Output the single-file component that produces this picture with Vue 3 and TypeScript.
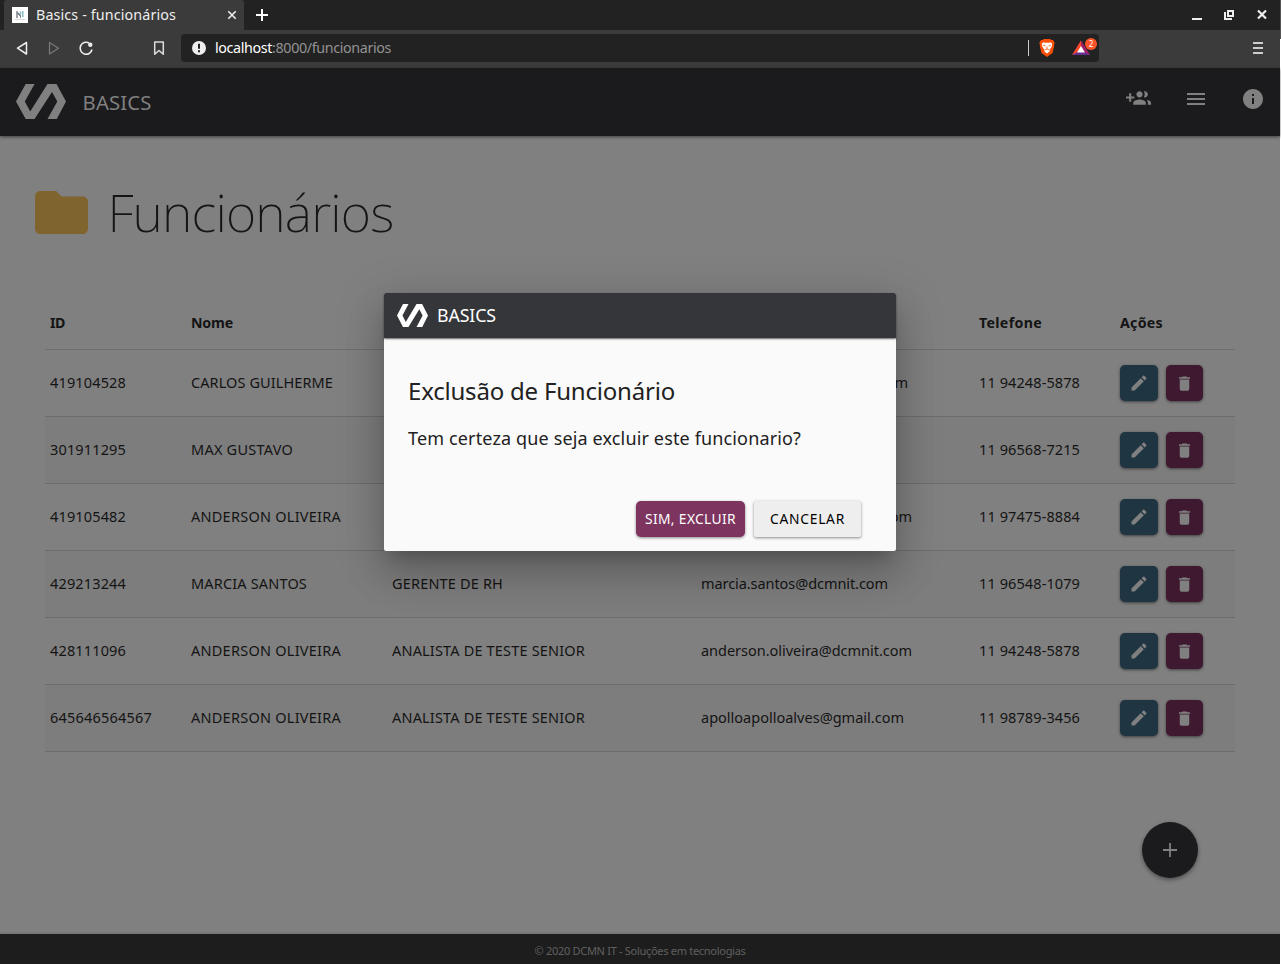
<script setup lang="ts">
import { onMounted } from 'vue'

interface Employee {
  id: string
  name: string
  role: string
  email: string
  phone: string
  w: number[]
}

const headers = [
  { t: 'ID', w: 15 }, { t: 'Nome', w: 42 }, { t: 'Cargo', w: 43 },
  { t: 'E-mail', w: 46 }, { t: 'Telefone', w: 63 }, { t: 'Ações', w: 43 },
]

const employees: Employee[] = [
  { id: '419104528', name: 'CARLOS GUILHERME', role: 'ANALISTA DE TESTE SENIOR', email: 'carlos.guilherme@dcmnit.com', phone: '11 94248-5878', w: [76, 142, 193, 207, 101] },
  { id: '301911295', name: 'MAX GUSTAVO', role: 'ANALISTA DE TESTE', email: 'max.gustavo@dcmnit.com', phone: '11 96568-7215', w: [76, 102, 140, 180, 101] },
  { id: '419105482', name: 'ANDERSON OLIVEIRA', role: 'ANALISTA DE TESTE SENIOR', email: 'anderson.oliveira@dcmnit.com', phone: '11 97475-8884', w: [76, 150, 193, 211, 101] },
  { id: '429213244', name: 'MARCIA SANTOS', role: 'GERENTE DE RH', email: 'marcia.santos@dcmnit.com', phone: '11 96548-1079', w: [76, 116, 111, 187, 101] },
  { id: '428111096', name: 'ANDERSON OLIVEIRA', role: 'ANALISTA DE TESTE SENIOR', email: 'anderson.oliveira@dcmnit.com', phone: '11 94248-5878', w: [76, 150, 193, 211, 101] },
  { id: '645646564567', name: 'ANDERSON OLIVEIRA', role: 'ANALISTA DE TESTE SENIOR', email: 'apolloapolloalves@gmail.com', phone: '11 98789-3456', w: [102, 150, 193, 203, 101] },
]

const cells = (e: Employee): string[] => [e.id, e.name, e.role, e.email, e.phone]

const logoPath = 'M9.700 0h8.900L8.800 17.500l5.400 10L31.500 0h9L50 17.500 40.800 35h-9.300l9.800-17.500L36 8 18.500 35H9.700L0 17.500z'

// Tracks each label so that it fills its intended measure.
const fit = (el: HTMLElement, w: number) => {
  el.style.letterSpacing = '0px'
  const n = (el.textContent ?? '').length
  const natural = el.getBoundingClientRect().width
  el.style.letterSpacing = `${(w - natural) / n}px`
}
const vFit = {
  mounted: (el: HTMLElement, b: { value: number }) => fit(el, b.value),
}
onMounted(() => {
  document.title = 'Basics - funcionários'
})
</script>

<template>
  <div class="window">
    <div class="screen">
      <div class="tabs">
        <div class="tab">
          <svg class="favicon" viewBox="0 0 16 16"><rect width="16" height="16" fill="#fff" /><path d="M5 4v7M6 6l2.500 3" stroke="#6a6f78" stroke-width="1.300" fill="none" /><path d="M8.500 4.500v3M10.800 4v6" stroke="#82b8bd" stroke-width="1.400" /><path d="M8.500 8v3" stroke="#888" stroke-width="1" /><path d="M3 12.500h10" stroke="#ccc" stroke-width=".7" /></svg>
          <span v-fit="140" class="tab-title">Basics - funcionários</span>
          <svg class="tab-close" viewBox="0 0 10 10"><path d="M1.300 1.300l7.400 7.400M8.700 1.300L1.300 8.700" stroke="#eee" stroke-width="1.600" /></svg>
        </div>
        <svg class="new-tab" viewBox="0 0 12 12"><path d="M6 0v12M0 6h12" stroke="#fff" stroke-width="2" /></svg>
        <svg class="win-btns" viewBox="0 0 80 14">
          <path d="M2 12h10" stroke="#eee" stroke-width="2" />
          <path d="M38 4h5v5h-5z" stroke="#eee" stroke-width="2" fill="none" /><path d="M35 5v7h7" stroke="#eee" stroke-width="2" fill="none" />
          <path d="M68 3.500l8 8M76 3.500l-8 8" stroke="#eee" stroke-width="2.200" />
        </svg>
      </div>
      <div class="toolbar">
        <svg class="nav" viewBox="0 0 180 38">
          <path d="M26.500 12.500v11.500L17.500 18.200z" fill="none" stroke="#eee" stroke-width="1.500" stroke-linejoin="round" />
          <path d="M49.500 12.500v11.500L58.500 18.200z" fill="none" stroke="#777" stroke-width="1.300" stroke-linejoin="round" />
          <path d="M89 13A6 6 0 1 0 92 19.500" fill="none" stroke="#eee" stroke-width="1.600" /><circle cx="90.300" cy="14.700" r="2.200" fill="#eee" />
          <path d="M154.700 12h8.600v12.300l-4.300-3.800-4.300 3.800z" fill="none" stroke="#ddd" stroke-width="1.500" stroke-linejoin="round" />
        </svg>
        <div class="address">
          <svg class="warn" viewBox="0 0 14 14"><circle cx="7" cy="7" r="7" fill="#eee" /><path d="M7 2.700v5M7 9.300v2" stroke="#222" stroke-width="2" /></svg>
          <span v-fit="176" class="url"><b>localhost</b>:8000/funcionarios</span>
          <i class="divider"></i>
          <svg class="brave" viewBox="0 0 16 18"><path d="M3.500 1L5 0h6l1.500 1h1.500l1.700 3-.7 2 .2 1-1.700 7L8 18l-5.500-4L.8 7 1 6 .3 4 2 1z" fill="#fb4f08" /><path d="M2.800 4.800L4.500 3.200l1.500.5h4l1.500-.5 1.700 1.600-.3 2.500-2 3.200L10.500 12.500 8 14.500l-2.500-2-.4-2-2-3.200z" fill="#fff" /><path d="M4 6.200l2.500.8M12 6.200l-2.500.8M5.500 11l2.500-1 2.500 1M8 7.500v2.500" fill="none" stroke="#fb4f08" stroke-width=".8" /></svg>
          <svg class="bat" viewBox="0 0 26 18"><path d="M9 2.500L0 17h18z" fill="#662d91" /><path d="M9 2.500L0 17l9-5z" fill="#ff4724" /><path d="M9 2.500L18 17l-9-5z" fill="#9e1f63" /><path d="M9 8l-4 6.500h8z" fill="#fff" /><circle cx="19" cy="6" r="6" fill="#fb542b" /><text x="19" y="8.600" text-anchor="middle" class="badge">2</text></svg>
        </div>
        <svg class="menu" viewBox="0 0 10 12"><path d="M0 1h10M0 6h10M0 11h10" stroke="#ccc" stroke-width="1.800" /></svg>
      </div>

      <header class="appbar">
        <svg class="logo" viewBox="0 0 50 35"><path :d="logoPath" fill="#808080" /></svg>
        <span v-fit="69" class="brand">BASICS</span>
        <svg class="ic-group" viewBox="0 0 24 24"><path fill="#808080" d="M8 10H5V7H3v3H0v2h3v3h2v-3h3v-2zm10 1c1.660 0 2.990-1.340 2.990-3S19.660 5 18 5c-.32 0-.63.050-.91.140.57.810.9 1.790.9 2.860s-.34 2.040-.9 2.860c.28.090.59.140.91.140zm-5 0c1.660 0 2.990-1.340 2.990-3S14.660 5 13 5s-3 1.340-3 3 1.340 3 3 3zm6.620 2.160c.83.730 1.380 1.660 1.380 2.840v2h3v-2c0-1.540-2.370-2.490-4.380-2.840zM13 13c-2 0-6 1-6 3v2h12v-2c0-2-4-3-6-3z" /></svg>
        <svg class="ic-menu" viewBox="0 0 24 24"><path fill="#808080" d="M3 18h18v-2H3v2zm0-5h18v-2H3v2zm0-7v2h18V6H3z" /></svg>
        <svg class="ic-info" viewBox="0 0 24 24"><path fill="#808080" d="M12 2C6.480 2 2 6.480 2 12s4.480 10 10 10 10-4.480 10-10S17.520 2 12 2zm1 15h-2v-6h2v6zm0-8h-2V7h2v2z" /></svg>
      </header>

      <main>
        <div class="title">
          <svg class="folder" viewBox="2 4 20 16" preserveAspectRatio="none"><path fill="#80642d" d="M10 4H4c-1.100 0-1.990.9-1.990 2L2 18c0 1.100.9 2 2 2h16c1.100 0 2-.9 2-2V8c0-1.100-.9-2-2-2h-8l-2-2z" /></svg>
          <h1><span v-fit="286">Funcionários</span></h1>
        </div>
        <div class="table">
          <div class="row head">
            <div v-for="h in headers" :key="h.t" class="cell"><span v-fit="h.w">{{ h.t }}</span></div>
          </div>
          <div v-for="(e, i) in employees" :key="i" class="row" :class="{ odd: i % 2 }">
            <div v-for="(c, j) in cells(e)" :key="j" class="cell data"><span v-fit="e.w[j]">{{ c }}</span></div>
            <div class="cell actions">
              <button class="edit"><svg viewBox="0 0 24 24"><path fill="#808080" d="M3 17.250V21h3.750L17.810 9.940l-3.750-3.750L3 17.250zM20.710 7.040c.39-.39.39-1.020 0-1.410l-2.340-2.340c-.39-.39-1.020-.39-1.410 0l-1.830 1.830 3.750 3.750 1.830-1.830z" /></svg></button>
              <button class="del"><svg viewBox="0 0 24 24"><path fill="#808080" d="M6 19c0 1.100.9 2 2 2h8c1.100 0 2-.9 2-2V7H6v12zM19 4h-3.500l-1-1h-5l-1 1H5v2h14V4z" /></svg></button>
            </div>
          </div>
        </div>
      </main>
      <button class="fab"><svg viewBox="0 0 14 14"><path d="M7 0v14M0 7h14" stroke="#808080" stroke-width="1.800" /></svg></button>
      <footer><span v-fit="211">© 2020 DCMN IT - Soluções em tecnologias</span></footer>
    </div>
    <div class="edge"></div>

    <section class="dialog">
      <div class="dialog-bar">
        <svg class="logo-sm" viewBox="0 0 50 35" preserveAspectRatio="none"><path :d="logoPath" fill="#fff" /></svg>
        <span v-fit="59">BASICS</span>
      </div>
      <h2><span v-fit="267">Exclusão de Funcionário</span></h2>
      <p><span v-fit="393">Tem certeza que seja excluir este funcionario?</span></p>
      <div class="dialog-actions">
        <button class="confirm"><span v-fit="91">SIM, EXCLUIR</span></button>
        <button class="cancel"><span v-fit="75">CANCELAR</span></button>
      </div>
    </section>
  </div>
</template>

<style>
body { margin: 0; overflow: hidden; }
</style>
<style scoped>
* { box-sizing: border-box; }
.window { position: relative; display: flex; width: 1281px; height: 964px; font-family: "Noto Sans", sans-serif; background: #fff; overflow: hidden; }
.screen { width: 1280px; height: 964px; background: #808080; display: flex; flex-direction: column; }
.edge { width: 1px; background: linear-gradient(#555 39px, #fff 39px); }
span { display: inline-block; white-space: pre; }
svg { display: block; flex: none; }
button { border: 0; padding: 0; font-family: inherit; display: flex; align-items: center; justify-content: center; }
.tabs { height: 30px; background: #222; display: flex; align-items: center; flex: none; }
.tab { margin-left: 4px; width: 240px; height: 30px; background: #3b3b3b; border-radius: 3px 3px 0 0; display: flex; align-items: center; padding: 0 7px 0 8px; }
.favicon { width: 16px; height: 16px; }
.tab-title { margin-left: 8px; font-size: 14.3px; color: #eee; line-height: 30px; }
.tab-close { width: 10px; height: 10px; margin-left: auto; }
.new-tab { width: 12px; height: 12px; margin-left: 12px; }
.win-btns { width: 80px; height: 14px; margin-left: auto; margin-right: 10px; margin-top: -2px; }
.toolbar { height: 38px; background: #3b3b3b; display: flex; align-items: flex-start; flex: none; }
.nav { width: 180px; height: 38px; }
.address { margin: 4px 0 0 1px; width: 918px; height: 28px; border-radius: 4px; background: #222; display: flex; align-items: center; }
.warn { width: 14px; height: 14px; margin-left: 11px; }
.url { margin-left: 9px; font-size: 14.3px; color: #929292; line-height: 28px; }
.url b { color: #fff; font-weight: 400; }
.divider { width: 1px; height: 16px; background: #ccc; margin-left: auto; }
.brave { width: 16px; height: 18px; margin-left: 10px; }
.bat { width: 26px; height: 18px; margin: -2px 1px 0 17px; }
.badge { font-size: 8px; fill: #fff; }
.menu { width: 10px; height: 12px; margin: 12px 0 0 154px; }
.appbar { height: 68px; background: #1b1b1d; flex: none; display: flex; padding-left: 16px; box-shadow: 0 1px 3px rgba(0,0,0,.5); z-index: 1; }
.logo { width: 50px; height: 35px; margin-top: 16px; }
.brand { margin-left: 16.6px; font-size: 20.3px; line-height: 68px; color: #808080; }
.ic-group { width: 25px; height: 25px; margin: 18px 0 0 auto; }
.ic-menu { width: 24px; height: 24px; margin: 19px 0 0 33px; }
.ic-info { width: 24px; height: 24px; margin: 19px 15px 0 33.5px; }
main { flex: 1; }
.title { display: flex; height: 160px; padding-left: 35px; }
.folder { width: 53px; height: 43px; margin-top: 55px; }
h1 { margin: 38px 0 0 19.5px; font-size: 52px; line-height: 76px; font-weight: 200; color: #151515; }
.table { margin-left: 45px; width: 1190px; font-size: 14.5px; color: #141414; }
.row { display: grid; grid-template-columns: 141px 201px 309px 278px 141px 120px; height: 67px; border-bottom: 1px solid #6d6d6d; align-items: center; }
.head { height: 54px; font-weight: 700; font-size: 14.2px; }
.odd { background: #7d7d7d; }
.cell { padding-left: 5px; }
.data { padding-bottom: 2px; }
.actions { display: flex; gap: 8px; }
.edit, .del { width: 38px; height: 36px; border-radius: 5px; background: #1f3542; box-shadow: 0 1px 3px rgba(0,0,0,.5); }
.del { width: 37px; background: #3e1930; }
.edit svg { width: 20px; height: 20px; margin-right: 1px; }
.del svg { width: 19px; height: 19px; }
.fab { position: absolute; left: 1142px; top: 822px; width: 56px; height: 56px; border-radius: 50%; background: #1b1b1d; box-shadow: 0 2px 4px rgba(0,0,0,.4); }
.fab svg { width: 14px; height: 14px; margin-right: 1px; }
footer { height: 30px; background: #1d1d1d; color: #606060; display: flex; justify-content: center; font-size: 11px; line-height: 34px; box-shadow: 0 0 3px rgba(0,0,0,.25); }
.dialog { position: absolute; left: 384px; top: 293px; width: 512px; height: 258px; background: #fafafa; border-radius: 2px; overflow: visible; box-shadow: 0 11px 15px -7px rgba(0,0,0,.2), 0 24px 38px 3px rgba(0,0,0,.14), 0 9px 46px 8px rgba(0,0,0,.12); }
.dialog-bar { height: 45px; background: #353639; color: #fff; border-radius: 2px 2px 0 0; display: flex; align-items: center; padding-left: 13px; font-size: 17.8px; box-shadow: 0 1px 2px rgba(0,0,0,.6); }
.dialog-bar span { padding-bottom: 2px; }
.logo-sm { width: 31px; height: 23px; margin-right: 9px; }
h2 { margin: 35px 0 0 24px; font-size: 24px; line-height: 36px; font-weight: 400; color: #212121; }
p { margin: 14px 0 0 24px; font-size: 18px; line-height: 30px; color: #212121; }
.dialog-actions { display: flex; gap: 9px; margin: 48px 35px 0 0; justify-content: flex-end; }
.confirm, .cancel { height: 36px; width: 109px; padding-bottom: 2px; border-radius: 5px; background: #7d345e; color: #fff; font-size: 13.8px; box-shadow: 0 1px 3px rgba(0,0,0,.45); }
.cancel { width: 107px; background: #eee; color: #000; border-radius: 2px; }
</style>
